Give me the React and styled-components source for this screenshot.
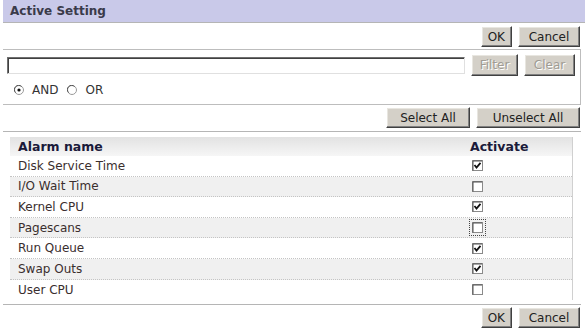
import React from "react";
import styled, { createGlobalStyle } from "styled-components";

const Global = createGlobalStyle`
  html, body { margin: 0; padding: 0; background: #fff; }
  body { font-family: "DejaVu Sans", Verdana, sans-serif; font-size: 12px; color: #333; }
`;

const Page = styled.div`
  width: 585px;
  height: 332px;
  overflow: hidden;
`;

const Header = styled.div`
  margin-left: 3px;
  height: 22px;
  background: #c9c9e9;
  border-bottom: 1px solid #b5b5b5;
  display: flex;
  align-items: center;
  padding-left: 7px;
  font-weight: bold;
  font-size: 12px;
  color: #3a3a4a;
`;

const ButtonBar = styled.div`
  display: flex;
  justify-content: flex-end;
  gap: 6px;
  padding: ${(p) => p.$pad || "3px 5px 2px 0"};
`;

const Btn = styled.button`
  font-family: "DejaVu Sans", Verdana, sans-serif;
  font-size: 12px;
  height: ${(p) => p.$h || 21}px;
  min-width: ${(p) => p.$w}px;
  padding: 0 6px;
  background: #d4d0c8;
  color: ${(p) => (p.disabled ? "#a09c94" : "#222")};
  text-shadow: ${(p) => (p.disabled ? "1px 1px 0 #fff" : "none")};
  border: 1px solid;
  border-color: #fff #404040 #404040 #fff;
  box-shadow: inset -1px -1px 0 #808080, inset 1px 1px 0 #e8e6e0;
  cursor: default;
`;

const FilterBox = styled.div`
  margin: 0 4px 0 3px;
  border-top: 1px solid #bdbdbd;
  border-right: 1px solid #bdbdbd;
  border-bottom: 1px solid #bdbdbd;
  height: 56px;
  box-sizing: border-box;
`;

const FilterRow = styled.div`
  display: flex;
  align-items: center;
  padding: 4px 0 0 4px;
  gap: 6px;
`;

const TextInput = styled.input`
  width: 458px;
  height: 17px;
  box-sizing: border-box;
  border: 1px solid;
  border-color: #707070 #e0e0e0 #e0e0e0 #707070;
  box-shadow: inset 1px 1px 0 #404040;
  margin: 0;
  padding: 0;
`;

const RadioRow = styled.div`
  display: flex;
  align-items: center;
  height: 14px;
  margin-top: 7px;
  padding-left: 11px;
  font-size: 12px;
  color: #333;
`;

const RadioLabel = styled.span`
  margin: 0 9px 0 8px;
`;

const Radio = ({ checked }) => (
  <svg width="10" height="10" viewBox="0 0 10 10">
    <circle cx="5" cy="5" r="4.5" fill="#fff" stroke="#9a9a9a" />
    <path d="M1.6 7.6 A4 4 0 0 1 7.6 1.6" fill="none" stroke="#555" strokeWidth="1" />
    {checked && <circle cx="5" cy="5" r="1.6" fill="#111" />}
  </svg>
);

const Divider = styled.div`
  margin: ${(p) => p.$m || "0 4px 0 3px"};
  border-top: 1px solid #b5b5b5;
`;

const Table = styled.div`
  margin: 5px 12px 0 10px;
  border-right: 1px solid #d0d0d0;
`;

const Row = styled.div`
  display: grid;
  grid-template-columns: 451px 1fr;
  height: ${(p) => (p.$head ? 19 : 20.6)}px;
  align-items: center;
  background: ${(p) =>
    p.$head
      ? "linear-gradient(#e2e2e2, #f6f6f6)"
      : p.$alt
      ? "#f0f0f0"
      : "#fff"};
  border-bottom: ${(p) => (p.$head || p.$last ? "none" : "1px dotted #c4c4c4")};
  box-sizing: border-box;
  font-weight: ${(p) => (p.$head ? "bold" : "normal")};
  color: ${(p) => (p.$head ? "#1a1a3a" : "#3a2e2e")};
  font-size: ${(p) => (p.$head ? "12.5px" : "12px")};
`;

const NameCell = styled.div`
  padding-left: 8px;
  white-space: nowrap;
`;

const CheckCell = styled.div`
  padding-left: ${(p) => (p.$head ? "9px" : "12px")};
  display: flex;
  align-items: center;
`;

const Focus = styled.span`
  display: inline-flex;
  padding: 2px;
  margin: -3px;
  outline: ${(p) => (p.$on ? "1px dotted #444" : "none")};
`;

const Check = ({ checked }) => (
  <svg width="11" height="11" viewBox="0 0 11 11">
    <rect x="0.5" y="0.5" width="10" height="10" fill="#fff" stroke="#8a8a8a" />
    <path d="M1 10.5 V1 H10" fill="none" stroke="#505050" />
    {checked && (
      <path d="M2.5 5 L4.5 7.5 L8.5 2.8" fill="none" stroke="#111" strokeWidth="1.8" />
    )}
  </svg>
);

const rows = [
  ["Disk Service Time", true],
  ["I/O Wait Time", false],
  ["Kernel CPU", true],
  ["Pagescans", false, true],
  ["Run Queue", true],
  ["Swap Outs", true],
  ["User CPU", false],
];

export default function App() {
  return (
    <Page>
      <Global />
      <Header>Active Setting</Header>
      <ButtonBar $pad="3px 5px 2px 0">
        <Btn $w={26}>OK</Btn>
        <Btn $w={62}>Cancel</Btn>
      </ButtonBar>
      <FilterBox>
        <FilterRow>
          <TextInput />
          <Btn $w={47} $h={22} disabled>Filter</Btn>
          <Btn $w={51} $h={22} disabled>Clear</Btn>
        </FilterRow>
        <RadioRow>
          <Radio checked />
          <RadioLabel>AND</RadioLabel>
          <Radio />
          <RadioLabel>OR</RadioLabel>
        </RadioRow>
      </FilterBox>
      <ButtonBar $pad="2px 5px 3px 0">
        <Btn $w={84}>Select All</Btn>
        <Btn $w={104}>Unselect All</Btn>
      </ButtonBar>
      <Divider />
      <Table>
        <Row $head>
          <NameCell>Alarm name</NameCell>
          <CheckCell $head>Activate</CheckCell>
        </Row>
        {rows.map(([name, on, focus], i) => (
          <Row key={name} $alt={i % 2 === 1} $last={i === rows.length - 1}>
            <NameCell>{name}</NameCell>
            <CheckCell>
              <Focus $on={focus}>
                <Check checked={on} />
              </Focus>
            </CheckCell>
          </Row>
        ))}
      </Table>
      <Divider $m="4px 4px 0 3px" />
      <ButtonBar $pad="2px 5px 0 0">
        <Btn $w={26}>OK</Btn>
        <Btn $w={62}>Cancel</Btn>
      </ButtonBar>
    </Page>
  );
}
